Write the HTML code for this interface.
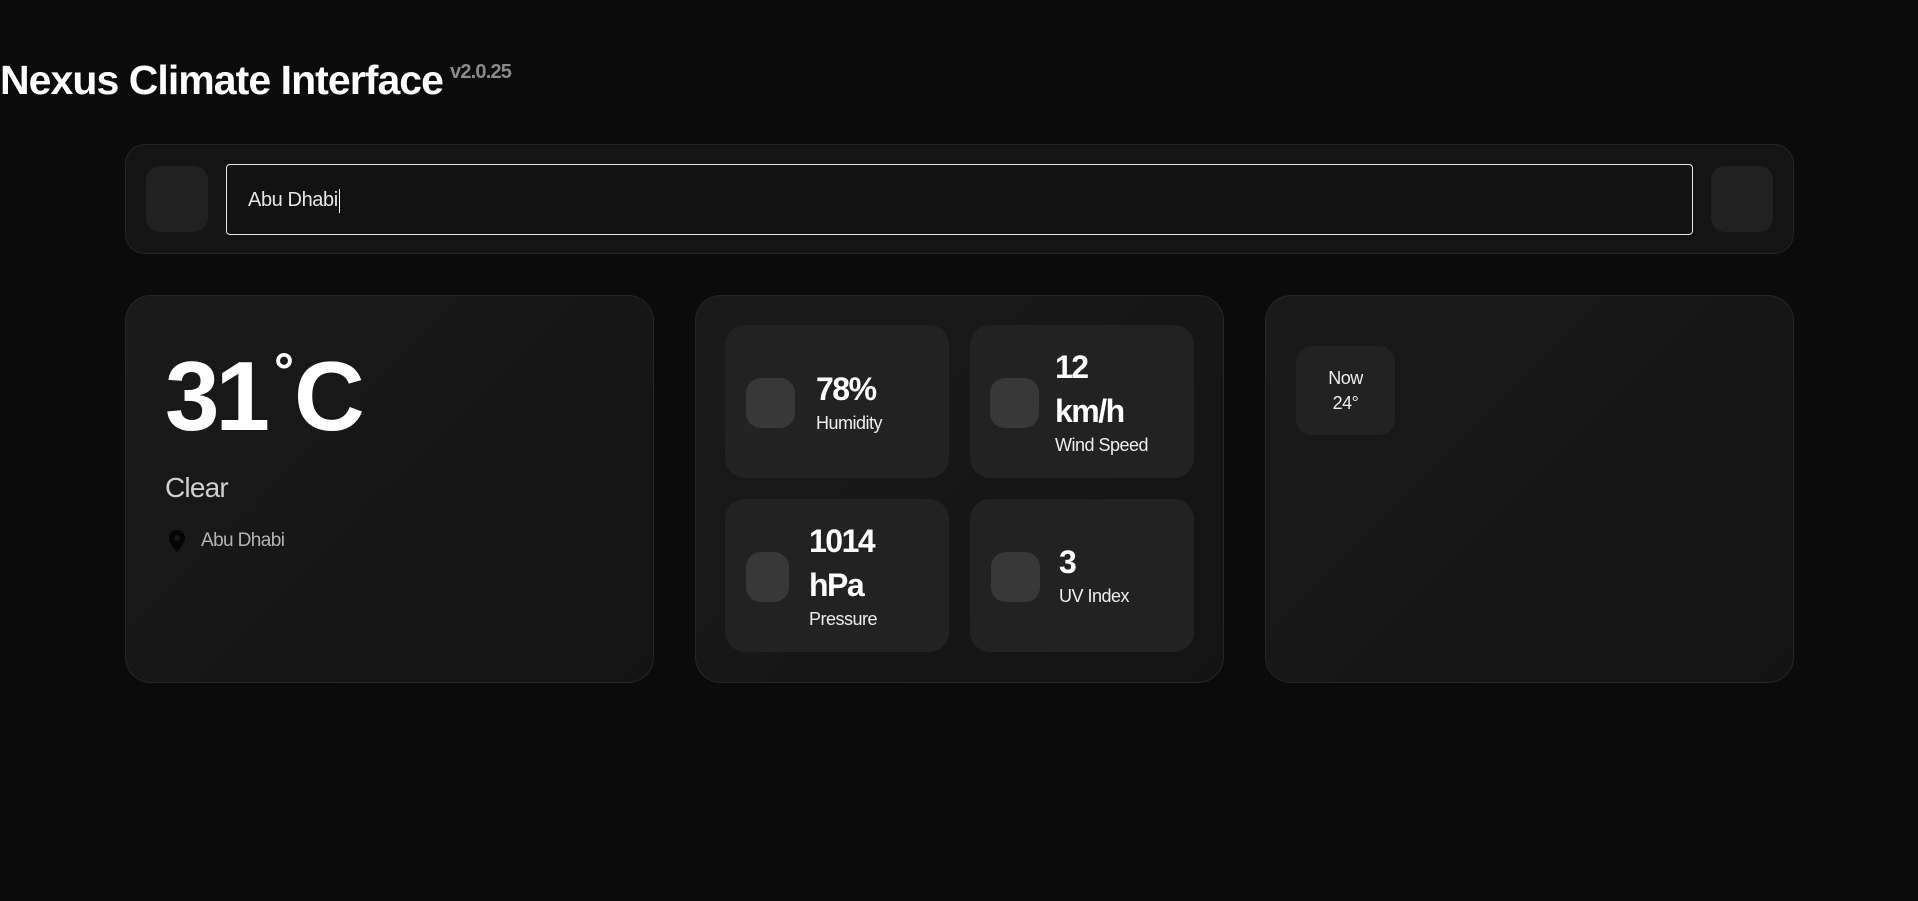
<!DOCTYPE html>
<html><head><meta charset="utf-8"><style>
*{margin:0;padding:0;box-sizing:border-box}
body{width:1918px;height:901px;background:#0b0b0b;font-family:"Liberation Sans",sans-serif;color:#fff;position:relative;overflow:hidden}
.a{position:absolute}
h1{position:absolute;left:0;top:57px;font-size:41px;font-weight:700;letter-spacing:-0.95px;white-space:nowrap}
.ver{left:450px;top:61px;font-size:20px;font-weight:700;color:#8a8a8a;letter-spacing:-0.8px}
.search{left:125px;top:144px;width:1669px;height:110px;background:#141414;border:1px solid #242424;border-radius:20px}
.btn{width:62px;height:66px;top:166px;background:#212121;border-radius:14px}
.input{left:226px;top:164px;width:1467px;height:71px;border:1.5px solid #e8e8e8;border-radius:4px;background:#121212;font-size:20px;color:#e6e6e6;padding-left:21px;line-height:70px;letter-spacing:-0.4px}
.caret{display:inline-block;width:1.5px;height:24px;background:#fff;vertical-align:middle;margin-left:1px}
.card{top:295px;width:529px;height:388px;border:1px solid #262626;border-radius:26px;background:linear-gradient(135deg,#1a1a1a,#131313)}
.temp{left:165px;top:346px;font-size:98px;font-weight:900;letter-spacing:-4px;line-height:1}
.tile{width:224px;height:153px;background:#222;border-radius:20px}
.ic{width:49px;height:50px;background:#383838;border-radius:15px}
.big{font-size:32px;font-weight:900;letter-spacing:-1.5px;line-height:44px}
.lab{font-size:18px;color:#eee;letter-spacing:-0.5px}
</style></head><body>
<h1>Nexus Climate Interface</h1>
<div class="a ver">v2.0.25</div>
<div class="a search"></div>
<div class="a btn" style="left:146px"></div>
<div class="a btn" style="left:1711px"></div>
<div class="a input">Abu Dhabi<span class="caret"></span></div>

<div class="a card" style="left:125px"></div>
<div class="a temp">31<span style="font-size:50px;vertical-align:42px;margin:0 4px 0 8px">°</span>C</div>
<div class="a" style="left:165px;top:472px;font-size:28px;color:#cfcfcf;letter-spacing:-0.8px">Clear</div>
<svg class="a" style="left:169px;top:530px" width="16" height="22" viewBox="0 0 16 22"><path d="M8 0C3.6 0 0 3.4 0 7.8 0 13.5 8 22 8 22s8-8.5 8-14.2C16 3.4 12.4 0 8 0zm0 11a3 3 0 110-6 3 3 0 010 6z" fill="#050505"/></svg>
<div class="a" style="left:201px;top:530px;font-size:19px;color:#b5b5b5;letter-spacing:-0.6px">Abu Dhabi</div>

<div class="a card" style="left:695px"></div>
<div class="a tile" style="left:725px;top:325px"></div>
<div class="a tile" style="left:970px;top:325px"></div>
<div class="a tile" style="left:725px;top:499px"></div>
<div class="a tile" style="left:970px;top:499px"></div>
<div class="a ic" style="left:746px;top:378px"></div>
<div class="a ic" style="left:990px;top:378px"></div>
<div class="a ic" style="left:746px;top:552px;width:43px"></div>
<div class="a ic" style="left:991px;top:552px"></div>
<div class="a" style="left:816px;top:367px"><div class="big">78%</div><div class="lab" style="margin-top:2px">Humidity</div></div>
<div class="a" style="left:1055px;top:345px"><div class="big">12<br>km/h</div><div class="lab" style="margin-top:2px">Wind Speed</div></div>
<div class="a" style="left:809px;top:519px"><div class="big">1014<br>hPa</div><div class="lab" style="margin-top:2px">Pressure</div></div>
<div class="a" style="left:1059px;top:540px"><div class="big">3</div><div class="lab" style="margin-top:2px">UV Index</div></div>

<div class="a card" style="left:1265px"></div>
<div class="a" style="left:1296px;top:346px;width:99px;height:89px;background:#222;border-radius:16px;text-align:center;font-size:18px;line-height:25px;padding-top:20px;color:#eee;letter-spacing:-0.5px">Now<br>24°</div>
</body></html>
